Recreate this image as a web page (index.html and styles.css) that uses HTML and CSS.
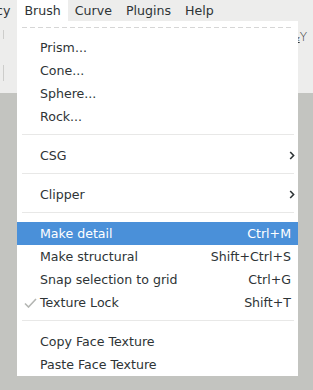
FILE: index.html
```html
<!DOCTYPE html>
<html lang="en">
<head>
    <meta charset="UTF-8">
    <title>Brush menu</title>
    <link rel="stylesheet" href="styles.css">
</head>
<body>
    <div class="window">
        <div class="menubar">
            <div class="menubar-item clipped">cy</div>
            <div class="menubar-item open">Brush</div>
            <div class="menubar-item">Curve</div>
            <div class="menubar-item">Plugins</div>
            <div class="menubar-item">Help</div>
        </div>

        <div class="toolbar">
            <div class="toolbar-row first">
                <span class="tool-sep short"></span>
                <span class="axis-icon"><span class="axis-z">z</span><span class="axis-y">Y</span></span>
            </div>
            <div class="toolbar-row">
                <span class="tool-sep tall"></span>
            </div>
        </div>

        <div class="workspace"></div>

        <div class="menu">
            <div class="tearoff"></div>

            <div class="item"><span class="check"></span><span class="label">Prism...</span></div>
            <div class="item"><span class="check"></span><span class="label">Cone...</span></div>
            <div class="item"><span class="check"></span><span class="label">Sphere...</span></div>
            <div class="item"><span class="check"></span><span class="label">Rock...</span></div>

            <div class="separator"></div>

            <div class="item">
                <span class="check"></span><span class="label">CSG</span>
                <svg class="arrow" width="6" height="9" viewBox="0 0 6 9"><path d="M1.2 1 L4.6 4.5 L1.2 8" fill="none" stroke="#2e3436" stroke-width="1.6"/></svg>
            </div>

            <div class="separator"></div>

            <div class="item">
                <span class="check"></span><span class="label">Clipper</span>
                <svg class="arrow" width="6" height="9" viewBox="0 0 6 9"><path d="M1.2 1 L4.6 4.5 L1.2 8" fill="none" stroke="#2e3436" stroke-width="1.6"/></svg>
            </div>

            <div class="separator"></div>

            <div class="item active"><span class="check"></span><span class="label">Make detail</span><span class="accel">Ctrl+M</span></div>
            <div class="item"><span class="check"></span><span class="label">Make structural</span><span class="accel">Shift+Ctrl+S</span></div>
            <div class="item"><span class="check"></span><span class="label">Snap selection to grid</span><span class="accel">Ctrl+G</span></div>
            <div class="item">
                <span class="check">
                    <svg width="13" height="10" viewBox="0 0 13 10"><path d="M1 5.5 L4.5 9 L12 1" fill="none" stroke="#b4b6b3" stroke-width="1.6"/></svg>
                </span>
                <span class="label">Texture Lock</span><span class="accel">Shift+T</span>
            </div>

            <div class="separator"></div>

            <div class="item"><span class="check"></span><span class="label">Copy Face Texture</span></div>
            <div class="item"><span class="check"></span><span class="label">Paste Face Texture</span></div>
        </div>
    </div>
</body>
</html>
```

FILE: styles.css
```css
body {
    margin: 0;
    width: 313px;
    height: 390px;
    overflow: hidden;
    font-family: "DejaVu Sans", sans-serif;
    font-size: 12.6px;
    color: #2e3436;
    background-color: #c3c4c0;
}

.window {
    position: relative;
    height: 390px;
    display: flex;
    flex-direction: column;
}

.menubar {
    display: flex;
    height: 21px;
    background-color: #ededec;
}

.menubar-item {
    display: flex;
    align-items: center;
    padding: 0 7px;
    white-space: nowrap;
}

.menubar-item.clipped {
    margin-left: -11px;
}

.menubar-item.open {
    background-color: #fff;
}

.toolbar {
    height: 72px;
    background-color: #ededec;
    display: flex;
    flex-direction: column;
}

.toolbar-row {
    display: flex;
    align-items: flex-start;
    padding-left: 3px;
}

.toolbar-row.first {
    height: 35px;
}

.tool-sep {
    width: 1px;
    background-color: #cdcdcb;
}

.tool-sep.short {
    height: 9px;
    margin-top: 9px;
}

.tool-sep.tall {
    height: 16px;
    margin-top: 9px;
}

.axis-icon {
    margin-left: auto;
    margin-right: 6px;
    margin-top: 10px;
    display: flex;
    align-items: baseline;
    color: #2e3436;
    line-height: 1;
}

.axis-z {
    font-size: 7px;
    text-decoration: underline;
}

.axis-y {
    font-size: 12px;
    font-weight: 300;
}

.workspace {
    flex: 1;
}

.menu {
    position: absolute;
    left: 17px;
    top: 21px;
    width: 281px;
    background-color: #fff;
}

.tearoff {
    height: 1px;
    margin: 6px 4px 8px 5px;
    background-image: repeating-linear-gradient(90deg, #d6d6d6 0 5px, transparent 5px 8px);
}

.item {
    display: flex;
    align-items: center;
    height: 23px;
    padding: 0 7px;
    white-space: nowrap;
}

.item.active {
    background-color: #4a90d9;
    color: #fff;
}

.check {
    width: 16px;
    display: flex;
    align-items: center;
}

.label {
    flex: 1;
}

.arrow {
    margin-right: -4px;
}

.separator {
    height: 1px;
    margin: 6px 4px 9px 5px;
    background-color: #e8e8e7;
}
```
